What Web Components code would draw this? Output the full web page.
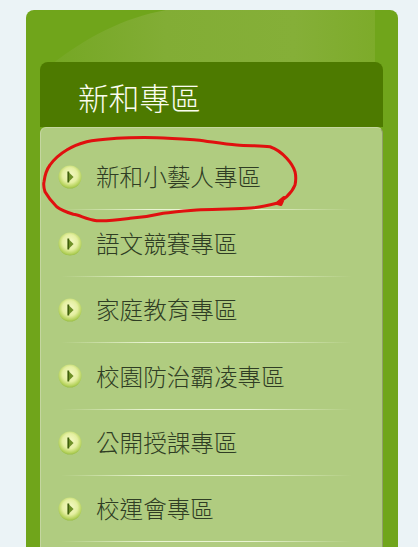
<!DOCTYPE html>
<html lang="zh-Hant"><head><meta charset="utf-8"><title>新和專區</title>
<style>
html,body{margin:0;height:100%;overflow:hidden;background:#ebf3f6}
body{padding:10px 20px 0 26px;box-sizing:border-box;font-family:"Noto Sans CJK TC","Noto Sans CJK JP",sans-serif}
</style></head><body>
<side-card heading="新和專區">
<menu-item>新和小藝人專區</menu-item>
<menu-item>語文競賽專區</menu-item>
<menu-item>家庭教育專區</menu-item>
<menu-item>校園防治霸凌專區</menu-item>
<menu-item>公開授課專區</menu-item>
<menu-item>校運會專區</menu-item>
</side-card>
<script>
class PlayIcon extends HTMLElement{
  constructor(){super();this.attachShadow({mode:'open'}).innerHTML=`<style>
  :host{display:block;width:24px;height:24px;flex:none}
  svg{display:block}
  </style><svg width="24" height="24" viewBox="0 0 24 24">
  <defs><radialGradient id="g" cx="50%" cy="42%" r="60%">
  <stop offset="0" stop-color="#f6fac8"/><stop offset=".55" stop-color="#e4efa0"/><stop offset=".85" stop-color="#b5d25c"/><stop offset="1" stop-color="#93b93f"/></radialGradient></defs>
  <circle cx="12" cy="12" r="11.5" fill="url(#g)"/>
  <rect x="9.400" y="6.500" width="1.800" height="11" fill="#40600c"/>
  <path d="M11 7.500 15.600 12 11 16.500Z" fill="#6f9128"/>
  </svg>`;}
}
class MenuItem extends HTMLElement{
  constructor(){super();this.attachShadow({mode:'open'}).innerHTML=`<style>
  :host{display:flex;align-items:center;gap:14px;box-sizing:border-box;height:66.4px;padding:0 0 0 17px;position:relative;color:#2f3d24;font-size:23.6px;font-weight:300;line-height:1}
  .sep{position:absolute;left:20px;right:30px;bottom:0;height:1px;background:linear-gradient(90deg,rgba(236,246,214,0),#e9f4d3 30%,#e9f4d3 65%,rgba(236,246,214,0))}
  </style><play-icon></play-icon><span><slot></slot></span><div class="sep"></div>`;}
}
class SideCard extends HTMLElement{
  constructor(){super();const h=this.getAttribute('heading');this.attachShadow({mode:'open'}).innerHTML=`<style>
  :host{display:block;position:relative;width:372px;min-height:700px;box-sizing:border-box;padding:52px 15px 0 14px;border-radius:8px 8px 0 0;background:#70a51b;overflow:hidden}
  .gloss{position:absolute;left:0;top:0;width:372px;height:60px}
  .wrap{position:relative}
  h2{margin:0;height:65px;box-sizing:border-box;padding:15px 0 0 38px;border-radius:8px 8px 0 0;background:#4d7a00;color:#fbfdf0;font-size:30.7px;font-weight:300;line-height:40px}
  .panel{border:1px solid #c4d6a0;border-right-color:#8f9f68;border-bottom:0;border-radius:6px 6px 0 0;background:#b0cc80;min-height:640px;padding-top:16px}
  svg.ink{position:absolute;left:-40px;top:-62px;pointer-events:none;overflow:visible}
  </style>
  <svg class="gloss" viewBox="0 0 372 60"><defs><linearGradient id="s" x1="0" y1="0" x2="1" y2="0"><stop offset="0" stop-color="#75a724"/><stop offset=".35" stop-color="#82ad35"/><stop offset=".75" stop-color="#85af38"/><stop offset="1" stop-color="#7dab2a"/></linearGradient></defs>
  <path d="M26 54C60 28 96 8 140 0H349V52H26Z" fill="url(#s)"/></svg>
  <div class="wrap"><h2>${h}</h2><div class="panel"><slot></slot></div>
  <svg class="ink" width="418" height="547" viewBox="0 0 418 547" fill="none" stroke="#e0100f" stroke-width="3" stroke-linecap="round" stroke-linejoin="round">
  <path d="M276.700 203.300C262 207 255 208 246.700 208.300C228 209.500 212 209 196.700 210C183 211 175 212 163.300 213.300C152 216 142 217.500 130 218.300C117 220 106 221.500 96.700 220.700C86 219.500 80 215 73.300 214.300C66 212 61 210 56.700 206.700C51 201 48 197 45 191.700C43.500 187 43.500 184 44 181.700C45 174 47 169 50 165C55 158 60 154 66.700 150C73 146 80 143.500 86.700 141.700C96 139.500 106 139 116.700 138.300C130 137.500 143 137.500 156.700 137.700C170 138 183 139 196.700 140C210 141.500 223 144 236.700 145C248 146 260 145.500 270 146.700C277 149 282 153 286.700 158.300C291 163 293.500 167 295 171.700C296 176 296 180.500 295 185C293 190 290 193.500 286.700 196.700C283 200 280 202 276.700 203.300L284 197.500L281 204.500L276.700 203.300"/></svg></div>`;}
}
customElements.define('play-icon',PlayIcon);
customElements.define('menu-item',MenuItem);
customElements.define('side-card',SideCard);
</script></body></html>
